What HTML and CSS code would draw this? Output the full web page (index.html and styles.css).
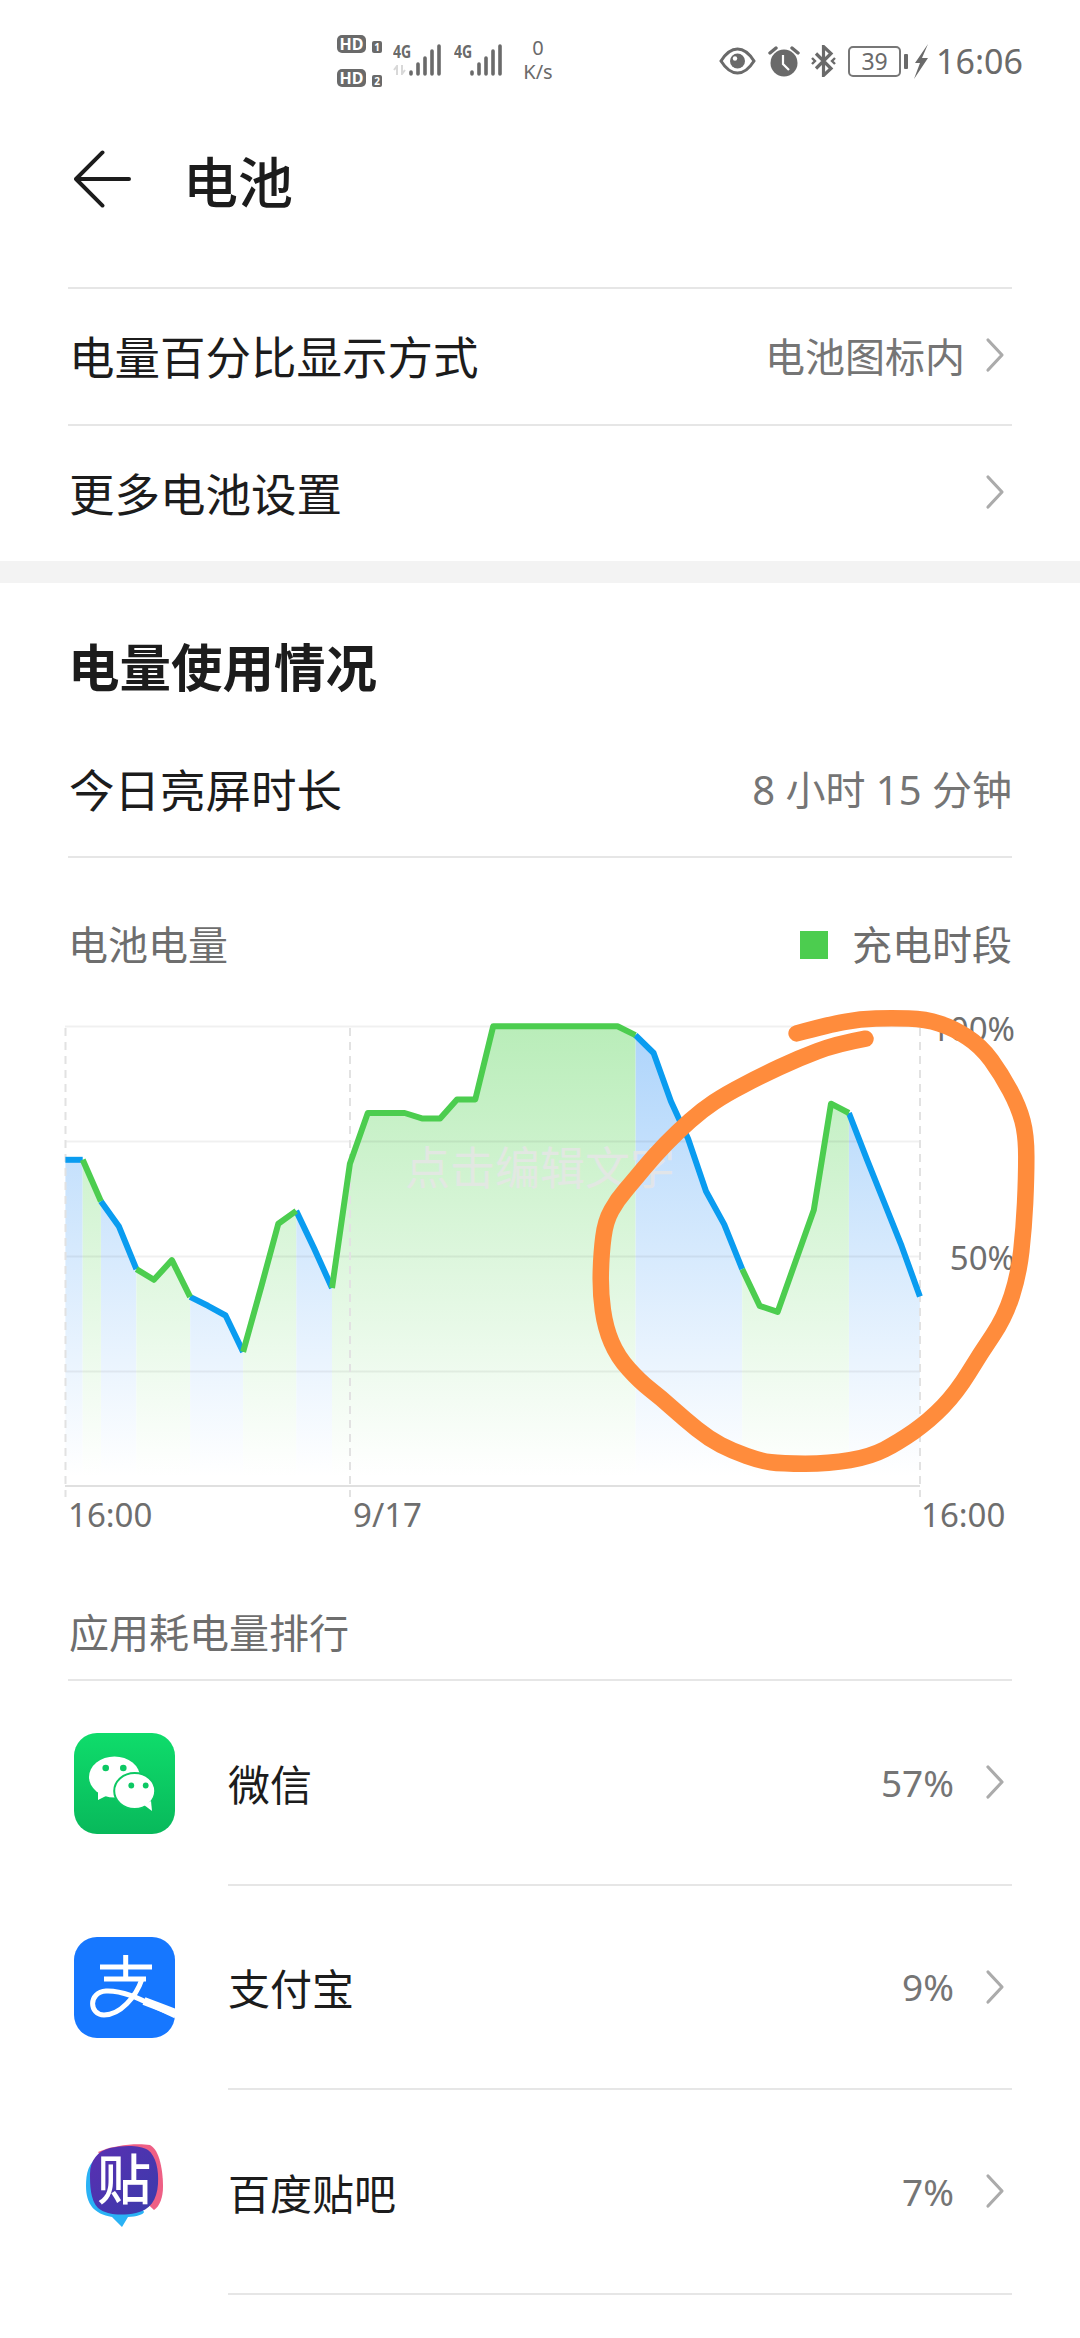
FILE: index.html
```html
<!DOCTYPE html>
<html lang="zh-CN">
<head>
    <meta charset="UTF-8">
    <meta name="viewport" content="width=device-width, initial-scale=1.0">
    <title>电池</title>
    <link rel="stylesheet" href="styles.css">
</head>
<body>

    <div class="status-bar">
        <div class="sim-col">
            <div class="sim-row"><span class="hd">HD</span><span class="hd-num">1</span></div>
            <div class="sim-row"><span class="hd">HD</span><span class="hd-num">2</span></div>
        </div>
        <div class="signal">
            <span class="net">4G</span>
            <svg class="traffic" viewBox="0 0 14 10"><path d="M4 10V1L1 5M9 0v9l3-4"/></svg>
            <svg class="bars" viewBox="0 0 34 32"><path d="M3 28v2M10 20v10M17 14v16M24 7v23M31 2v28"/></svg>
        </div>
        <div class="signal signal-two">
            <span class="net">4G</span>
            <svg class="bars" viewBox="0 0 34 32"><path d="M3 28v2M10 20v10M17 14v16M24 7v23M31 2v28"/></svg>
        </div>
        <div class="speed"><span>0</span><span>K/s</span></div>
        <div class="status-right">
            <svg class="st-eye" viewBox="0 0 37 28">
                <path d="M2 14C7 6 12 2 18.500 2s11.500 4 16.500 12c-5 8-10.500 12-16.500 12S7 22 2 14z" fill="none" stroke="#6a6a6a" stroke-width="3"/>
                <circle cx="18.500" cy="14" r="7.500" fill="#6a6a6a"/>
                <circle cx="16" cy="11.500" r="2.200" fill="#fff"/>
            </svg>
            <svg class="st-alarm" viewBox="0 0 32 32">
                <circle cx="16" cy="18" r="13.500" fill="#6a6a6a"/>
                <path d="M15 10v9l6 6" fill="none" stroke="#fff" stroke-width="2.200"/>
                <path d="M2 8l6-5M30 8l-6-5" fill="none" stroke="#6a6a6a" stroke-width="3.400" stroke-linecap="round"/>
            </svg>
            <svg class="st-bt" viewBox="0 0 25 32">
                <path d="M5 8.500l15 15-7.500 7V1.500l7.500 7L5 23.500" fill="none" stroke="#6a6a6a" stroke-width="3.200"/>
                <path d="M1 13l3 3-3 3M24 13l-3 3 3 3" fill="none" stroke="#6a6a6a" stroke-width="2.400"/>
            </svg>
            <div class="battery">39</div>
            <span class="battery-tip"></span>
            <svg class="st-bolt" viewBox="0 0 14 35"><path d="M14 0L1 19h5L0 35l14-21H8z" fill="#6a6a6a"/></svg>
            <span class="clock">16:06</span>
        </div>
    </div>

    <div class="title-bar">
        <svg class="back" viewBox="0 0 58 58"><path d="M29 2L2 29l27 27M2 29h54" fill="none" stroke="#1c1c1c" stroke-width="4" stroke-linecap="round" stroke-linejoin="round"/></svg>
        <h1>电池</h1>
    </div>

    <div class="list">
        <div class="row row-top">
            <span class="row-name">电量百分比显示方式</span>
            <span class="row-value">电池图标内</span>
            <svg class="chevron" viewBox="0 0 20 36"><path d="M3 3l14 15L3 33"/></svg>
        </div>
        <div class="row row-last">
            <span class="row-name">更多电池设置</span>
            <svg class="chevron" viewBox="0 0 20 36"><path d="M3 3l14 15L3 33"/></svg>
        </div>
    </div>

    <div class="band"></div>

    <h2 class="usage-title">电量使用情况</h2>
    <div class="list">
        <div class="row row-screen">
            <span class="row-name">今日亮屏时长</span>
            <span class="row-value">8 小时 15 分钟</span>
        </div>
    </div>

    <div class="chart-head">
        <span>电池电量</span>
        <span class="legend"><i class="legend-box"></i>充电时段</span>
    </div>

    <svg class="chart" viewBox="0 1000 1080 545">
        <defs>
            <linearGradient id="fillGreen" gradientUnits="userSpaceOnUse" x1="0" y1="1028" x2="0" y2="1478">
                <stop offset="0" stop-color="#b9edb9"/>
                <stop offset="1" stop-color="#ffffff"/>
            </linearGradient>
            <linearGradient id="fillBlue" gradientUnits="userSpaceOnUse" x1="0" y1="1028" x2="0" y2="1478">
                <stop offset="0" stop-color="#add4fb"/>
                <stop offset="1" stop-color="#ffffff"/>
            </linearGradient>
        </defs>

        <!-- fill under the line -->
        <g fill="url(#fillBlue)">
            <polygon points="65.4,1488 65.4,1161.8 82.7,1161.8 82.7,1488"/>
            <polygon points="100.9,1488 100.9,1203.2 118.8,1228.2 136.4,1271.1 136.4,1488"/>
            <polygon points="190.1,1488 190.1,1298.9 208,1307.8 225.6,1317.5 243.1,1353.9 243.1,1488"/>
            <polygon points="296.2,1488 296.2,1212.9 314.1,1250.4 332,1290 332,1488"/>
            <polygon points="635.4,1488 635.4,1037.1 653.6,1055 670.9,1103.2 688.1,1140.7 706,1193.2 724.2,1226.4 742.2,1271.1 742.2,1488"/>
            <polygon points="848.9,1488 848.9,1115 867.2,1162.1 884.4,1205 901.6,1247.9 919.9,1298.6 919.9,1488"/>
        </g>
        <g fill="url(#fillGreen)">
            <polygon points="82.7,1488 82.7,1161.8 100.9,1203.2 100.9,1488"/>
            <polygon points="136.4,1488 136.4,1271.1 153.9,1281.8 171.9,1262.1 190.1,1298.9 190.1,1488"/>
            <polygon points="243.1,1488 243.1,1353.9 261.7,1287.1 278.3,1225.7 296.2,1212.9 296.2,1488"/>
            <polygon points="332,1488 332,1290 349.9,1165.7 367.8,1115 404.7,1115 421.9,1120.4 440.1,1120.4 457,1101.4 475.3,1101.4 493.2,1028.2 617.5,1028.2 635.4,1037.1 635.4,1488"/>
            <polygon points="742.2,1488 742.2,1271.1 759.7,1307.9 777.6,1313.9 813.8,1212.1 831,1105.7 848.9,1115 848.9,1488"/>
        </g>

        <!-- grid -->
        <path class="grid" d="M65 1028.5H920M65 1143.5H920M65 1258.5H920M65 1373.5H920"/>
        <path class="baseline" d="M65 1488H920"/>
        <path class="dash" d="M65.5 1030V1499M350 1030V1499M920 1030V1499"/>

        <!-- battery line, blue while draining and green while charging -->
        <g class="line line-blue">
            <polyline points="65.4,1161.8 82.7,1161.8"/>
            <polyline points="100.9,1203.2 118.8,1228.2 136.4,1271.1"/>
            <polyline points="190.1,1298.9 208,1307.8 225.6,1317.5 243.1,1353.9"/>
            <polyline points="296.2,1212.9 314.1,1250.4 332,1290"/>
            <polyline points="635.4,1037.1 653.6,1055 670.9,1103.2 688.1,1140.7 706,1193.2 724.2,1226.4 742.2,1271.1"/>
            <polyline points="848.9,1115 867.2,1162.1 884.4,1205 901.6,1247.9 919.9,1298.6"/>
        </g>
        <g class="line line-green">
            <polyline points="82.7,1161.8 100.9,1203.2"/>
            <polyline points="136.4,1271.1 153.9,1281.8 171.9,1262.1 190.1,1298.9"/>
            <polyline points="243.1,1353.9 261.7,1287.1 278.3,1225.7 296.2,1212.9"/>
            <polyline points="332,1290 349.9,1165.7 367.8,1115 404.7,1115 421.9,1120.4 440.1,1120.4 457,1101.4 475.3,1101.4 493.2,1028.2 617.5,1028.2 635.4,1037.1"/>
            <polyline points="742.2,1271.1 759.7,1307.9 777.6,1313.9 813.8,1212.1 831,1105.7 848.9,1115"/>
        </g>

        <text class="axis" x="68" y="1529">16:00</text>
        <text class="axis" x="353" y="1529">9/17</text>
        <text class="axis" x="921" y="1529">16:00</text>
        <text class="axis" x="1015" y="1043" text-anchor="end">100%</text>
        <text class="axis" x="1015" y="1272" text-anchor="end">50%</text>

        <text class="watermark" x="405" y="1187">点击编辑文字</text>

        <!-- hand drawn marker ring -->
        <path class="marker" d="M865.5 1040.700Q836.200 1046.100 817.300 1053.300Q798.300 1060.400 779.400 1069.300Q760.400 1078.200 743.200 1087.200Q726 1096.100 714 1104.100Q701.900 1112.100 689.900 1122.900Q677.800 1133.600 665.700 1146.100Q653.600 1158.600 643.300 1171.100Q633 1183.600 625.300 1192.500Q617.500 1201.400 611.500 1212.200Q605.400 1222.900 603.400 1239Q601.300 1255 600.800 1274.700Q600.300 1294.300 602.900 1312.200Q605.400 1330 611.500 1344.300Q617.500 1358.600 628.700 1371.100Q639.900 1383.600 650.200 1391.600Q660.500 1399.600 672.600 1410.400Q684.600 1421.100 696.700 1430.900Q708.800 1440.700 720.900 1447Q732.900 1453.200 746.700 1458Q760.400 1462.900 770.800 1464.300Q781.100 1465.700 805.200 1465.700Q829.300 1465.700 850 1462.200Q870.600 1458.600 884.400 1451.500Q898.200 1444.300 913.700 1433.600Q929.200 1422.900 943 1408.600Q956.700 1394.300 968.800 1374.700Q980.800 1355 992.900 1337.200Q1004.900 1319.300 1011.800 1297.900Q1018.700 1276.400 1021.300 1253.200Q1023.900 1230 1025.100 1205Q1026.300 1180 1026.300 1158.600Q1026.300 1137.100 1022.500 1122.900Q1018.700 1108.600 1010.100 1092.500Q1001.500 1076.400 991.200 1062.200Q980.800 1047.900 967 1039Q953.300 1030 939.500 1025.600Q925.700 1021.100 908.500 1020.600Q891.300 1020 875.800 1020.600Q860.300 1021.100 844.800 1023.800Q829.300 1026.400 796.600 1035.400"/>
    </svg>

    <div class="apps-title">应用耗电量排行</div>

    <div class="apps">
        <div class="app-row">
            <svg class="app-icon" viewBox="0 0 101 101">
                <defs>
                    <linearGradient id="wechatBg" x1="0" y1="0" x2="0" y2="1">
                        <stop offset="0" stop-color="#0fdc6b"/>
                        <stop offset="1" stop-color="#08b95b"/>
                    </linearGradient>
                </defs>
                <rect width="101" height="101" rx="23" fill="url(#wechatBg)"/>
                <ellipse cx="40.500" cy="44" rx="25.500" ry="20.500" fill="#fff"/>
                <path d="M24 58l0 9 10-5z" fill="#fff"/>
                <circle cx="31.700" cy="35" r="3.300" fill="#0cc863"/>
                <circle cx="49.300" cy="35" r="3.300" fill="#0cc863"/>
                <ellipse cx="60.700" cy="58" rx="20.500" ry="18" fill="#fff" stroke="#0cc863" stroke-width="2"/>
                <path d="M70 72l8 6-1-10z" fill="#fff"/>
                <circle cx="57.300" cy="52.500" r="2.900" fill="#0cc863"/>
                <circle cx="71.700" cy="52.500" r="2.900" fill="#0cc863"/>
            </svg>
            <div class="app-body">
                <span class="app-name">微信</span>
                <span class="app-pct">57%</span>
                <svg class="chevron chevron-app" viewBox="0 0 20 36"><path d="M3 3l14 15L3 33"/></svg>
            </div>
        </div>
        <div class="app-row">
            <svg class="app-icon" viewBox="0 0 101 101">
                <defs>
                    <clipPath id="alipayClip"><rect width="101" height="101" rx="23"/></clipPath>
                </defs>
                <rect width="101" height="101" rx="23" fill="#1677ff"/>
                <g clip-path="url(#alipayClip)" fill="none" stroke="#fff" stroke-width="5">
                    <path d="M26 30h52M30 42h42M51.700 18v24"/>
                    <path d="M68 42C62 60 46 78 30 78 15 78 14 55 32 54 54 53 76 68 104 80"/>
                    <path d="M70 64L104 77" stroke-width="8"/>
                </g>
            </svg>
            <div class="app-body">
                <span class="app-name">支付宝</span>
                <span class="app-pct">9%</span>
                <svg class="chevron chevron-app" viewBox="0 0 20 36"><path d="M3 3l14 15L3 33"/></svg>
            </div>
        </div>
        <div class="app-row">
            <svg class="app-icon" viewBox="0 0 101 101">
                <defs>
                    <linearGradient id="tiebaBg" x1="0" y1="0" x2="1" y2="1">
                        <stop offset="0" stop-color="#5a2fb2"/>
                        <stop offset="1" stop-color="#3a3bab"/>
                    </linearGradient>
                </defs>
                <path d="M26 14C14 20 12 32 12 44c0 18 8 28 26 31l10 10 6-10c8 0 16-3 16-5L40 14z" fill="#2ab2f5"/>
                <path d="M24 10C40 3 62 1 76 3c10 5 13 27 13 42 0 10-3 19-9 23L50 40z" fill="#ee5f85"/>
                <path d="M36 6c14-3 30-3 38 2 8 6 11 20 10 34-1 16-8 26-22 29-14 3-30 2-38-5-8-8-8-24-8-34C16 18 24 9 36 6z" fill="url(#tiebaBg)"/>
                <text class="tieba-mark" x="50" y="58" text-anchor="middle">贴</text>
            </svg>
            <div class="app-body">
                <span class="app-name">百度贴吧</span>
                <span class="app-pct">7%</span>
                <svg class="chevron chevron-app" viewBox="0 0 20 36"><path d="M3 3l14 15L3 33"/></svg>
            </div>
        </div>
    </div>

</body>
</html>
```

FILE: styles.css
```css
* {
    box-sizing: border-box;
}
body {
    margin: 0;
    width: 1080px;
    height: 2338px;
    overflow: hidden;
    background-color: #fff;
    color: #1c1c1c;
    font-family: "Noto Sans", "Noto Sans CJK SC", sans-serif;
}

/* status bar */
.status-bar {
    height: 100px;
    padding: 35px 57px 0 337px;
    display: flex;
    align-items: flex-start;
    color: #6a6a6a;
}
.sim-col {
    display: flex;
    flex-direction: column;
    gap: 16px;
    width: 56px;
}
.sim-row {
    display: flex;
    align-items: flex-end;
    gap: 6px;
}
.hd {
    width: 29px;
    height: 18px;
    border-radius: 5px;
    background-color: #6a6a6a;
    color: #fff;
    font-size: 16px;
    line-height: 18px;
    text-align: center;
    font-weight: 700;
}
.hd-num {
    width: 10px;
    height: 12px;
    border-radius: 2px;
    background-color: #6a6a6a;
    color: #fff;
    font-size: 10px;
    line-height: 12px;
    text-align: center;
    font-weight: 700;
}
.signal {
    position: relative;
    width: 49px;
    height: 42px;
    margin-top: 9px;
}
.signal-two {
    margin-left: 12px;
}
.net {
    position: absolute;
    left: 0;
    top: -1px;
    font-size: 18px;
    line-height: 16px;
    font-weight: 700;
    transform: scaleX(0.78);
    transform-origin: left center;
}
.traffic {
    position: absolute;
    left: 0;
    top: 21px;
    width: 14px;
    height: 10px;
    fill: none;
    stroke: #d8d8d8;
    stroke-width: 2;
}
.bars {
    position: absolute;
    right: 0;
    top: 0;
    width: 34px;
    height: 32px;
    fill: none;
    stroke: #6a6a6a;
    stroke-width: 3.600;
    stroke-linecap: round;
}
.speed {
    width: 34px;
    margin-left: 18px;
    margin-top: 5px;
    display: flex;
    flex-direction: column;
    align-items: center;
    gap: 8px;
    font-size: 20px;
    line-height: 16px;
}
.status-right {
    margin-left: auto;
    margin-top: 10px;
    display: flex;
    align-items: center;
    height: 32px;
}
.st-eye {
    width: 37px;
    height: 28px;
    margin-right: 12px;
}
.st-alarm {
    width: 32px;
    height: 32px;
    margin-right: 11px;
}
.st-bt {
    width: 25px;
    height: 32px;
    margin-right: 12px;
}
.battery {
    width: 53px;
    height: 31px;
    border: 2px solid #777;
    border-radius: 5px;
    font-size: 23px;
    line-height: 27px;
    text-align: center;
}
.battery-tip {
    width: 4px;
    height: 15px;
    margin-left: 3px;
    margin-right: 6px;
    border-radius: 1px;
    background-color: #6a6a6a;
}
.st-bolt {
    width: 14px;
    height: 35px;
    margin-right: 8px;
}
.clock {
    font-size: 34px;
    line-height: 32px;
}

/* title */
.title-bar {
    height: 187px;
    padding: 50px 0 0 74px;
    display: flex;
    align-items: flex-start;
}
.back {
    width: 57px;
    height: 58px;
}
h1 {
    margin: -4px 0 0 52px;
    font-size: 55px;
    line-height: 72px;
    font-weight: 500;
}

/* settings rows */
.list {
    margin: 0 68px;
}
.row {
    display: flex;
    align-items: center;
    height: 137px;
    padding-bottom: 3px;
    border-top: 2px solid #e6e6e6;
}
.row-name {
    font-size: 45.500px;
    padding-left: 1px;
    margin-right: auto;
}
.row-value {
    font-size: 40px;
    color: #757575;
}
.row-screen {
    border-top: none;
    height: 135px;
    border-bottom: 2px solid #e6e6e6;
}
.chevron {
    width: 20px;
    height: 36px;
    margin: 0 7px 0 20px;
    fill: none;
    stroke: #ababab;
    stroke-width: 3.200;
    stroke-linecap: round;
    stroke-linejoin: round;
}
.chevron-app {
    margin-left: 31px;
}
.band {
    height: 22px;
    background-color: #f3f3f3;
}
.usage-title {
    margin: 0;
    padding: 49px 68px 0;
    height: 140px;
    font-size: 51.500px;
    line-height: 70px;
    font-weight: 700;
}

/* chart */
.chart-head {
    height: 140px;
    margin: 0 68px;
    padding-top: 60px;
    display: flex;
    align-items: flex-start;
    justify-content: space-between;
    font-size: 40px;
    line-height: 54px;
    color: #6e6e6e;
}
.legend {
    display: flex;
    align-items: center;
    height: 54px;
}
.legend-box {
    width: 28px;
    height: 28px;
    margin-right: 24px;
    background-color: #4ccd4f;
}
.chart {
    display: block;
    width: 1080px;
    height: 545px;
}
.grid {
    fill: none;
    stroke: #000;
    stroke-opacity: 0.06;
    stroke-width: 2;
}
.baseline {
    fill: none;
    stroke: #e0e0e0;
    stroke-width: 2;
}
.dash {
    fill: none;
    stroke: #e2e2e2;
    stroke-width: 2;
    stroke-dasharray: 8 6;
}
.line polyline {
    fill: none;
    stroke-width: 6;
    stroke-linejoin: round;
}
.line-blue polyline {
    stroke: #0a9cf0;
}
.line-green polyline {
    stroke: #4ccd4f;
}
.axis {
    font-size: 33px;
    fill: #6e6e6e;
}
.watermark {
    font-size: 45px;
    fill: #e6e6e6;
    fill-opacity: 0.85;
}
.marker {
    fill: none;
    stroke: #ff8c3c;
    stroke-width: 16.500;
    stroke-linecap: round;
    stroke-linejoin: round;
}

/* app ranking */
.apps-title {
    height: 138px;
    margin: 0 68px;
    padding: 63px 0 0 1px;
    font-size: 40px;
    line-height: 54px;
    color: #6e6e6e;
    border-bottom: 2px solid #e6e6e6;
}
.app-row {
    height: 204.500px;
    display: flex;
    align-items: center;
    padding: 0 68px 0 74px;
}
.app-icon {
    width: 101px;
    height: 101px;
    flex-shrink: 0;
    margin-right: 53px;
}
.app-body {
    flex: 1;
    height: 100%;
    display: flex;
    align-items: center;
    border-bottom: 2px solid #e6e6e6;
}
.app-name {
    font-size: 42px;
    margin-right: auto;
}
.app-pct {
    font-size: 37px;
    color: #757575;
}
.tieba-mark {
    font-size: 54px;
    font-weight: 500;
    fill: #fff;
}
```
